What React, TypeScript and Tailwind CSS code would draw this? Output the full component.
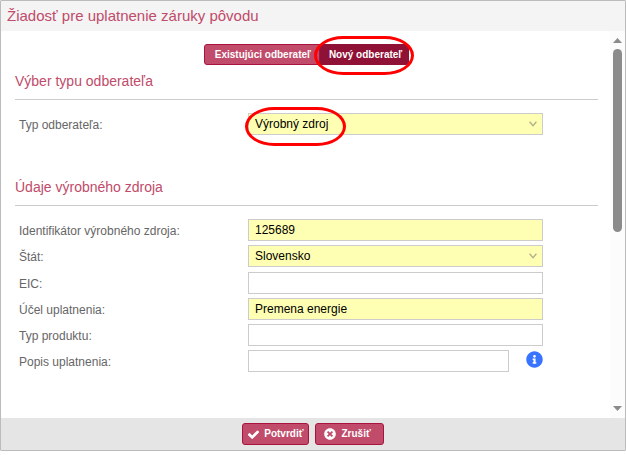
import { useState } from "react";
import type { ReactNode } from "react";
import { FaInfoCircle, FaTimesCircle } from "react-icons/fa";

const controlClass =
  "block w-full h-[22px] border border-[#cccccc] pl-1.5 text-xs text-black outline-none appearance-none";

function SectionTitle({ children }: { children: ReactNode }) {
  return (
    <h2 className="pb-2 border-b border-[#cccccc] text-sm leading-5 text-[#c04b6a]">
      {children}
    </h2>
  );
}

interface RowProps {
  id: string;
  label: string;
  children: ReactNode;
}

function Row({ id, label, children }: RowProps) {
  return (
    <div className="flex items-start pl-1 pr-[55px]">
      <label htmlFor={id} className="w-[229px] shrink-0 leading-6 text-[#666666]">
        {label}
      </label>
      {children}
    </div>
  );
}

interface TextRowProps {
  id: string;
  label: string;
  value?: string;
  required?: boolean;
}

function TextRow({ id, label, value = "", required = false }: TextRowProps) {
  return (
    <Row id={id} label={label}>
      <div className="flex-1 pb-1">
        <input
          id={id}
          type="text"
          defaultValue={value}
          className={`${controlClass} ${required ? "bg-[#ffffb3]" : "bg-white"}`}
        />
      </div>
    </Row>
  );
}

function SelectRow({ id, label, value }: { id: string; label: string; value: string }) {
  return (
    <Row id={id} label={label}>
      <div className="relative flex-1 pb-[5px]">
        <select id={id} defaultValue={value} className={`${controlClass} bg-[#ffffb3]`}>
          <option>{value}</option>
        </select>
        <svg
          viewBox="0 0 8 6"
          className="absolute right-[6px] top-2 w-2 h-1.5 pointer-events-none"
          fill="none"
          stroke="#b3b08c"
          strokeWidth="1.4"
        >
          <path d="M0.6 0.8 4 4.6 7.4 0.8" />
        </svg>
      </div>
    </Row>
  );
}

function CheckIcon() {
  return (
    <svg viewBox="0 0 1792 1792" className="size-[13px]" fill="currentColor" aria-hidden="true">
      <path d="M1671 566q0 40-28 68l-724 724-136 136q-28 28-68 28t-68-28l-136-136-362-362q-28-28-28-68t28-68l136-136q28-28 68-28t68 28l294 295 656-657q28-28 68-28t68 28l136 136q28 28 28 68z" />
    </svg>
  );
}

function Scrollbar() {
  return (
    <div className="w-[15px] shrink-0 flex flex-col items-center py-[7px] bg-[#fcfcfc]" aria-hidden="true">
      <svg viewBox="0 0 9 5" className="w-[9px] h-[5px]" fill="#8b8b8b">
        <path d="M4.5 0 9 5H0z" />
      </svg>
      <div className="flex-1 py-1.5">
        <div className="w-[9px] h-[52%] rounded-full bg-[#8b8b8b]" />
      </div>
      <svg viewBox="0 0 9 5" className="w-[9px] h-[5px]" fill="#8b8b8b">
        <path d="M4.5 5 9 0H0z" />
      </svg>
    </div>
  );
}

// Red outline that points the reader to a control
function Highlight({ className }: { className: string }) {
  return (
    <span
      className={`absolute border-3 border-[#ff0000] rounded-[30px/20px] pointer-events-none ${className}`}
    />
  );
}

export default function App() {
  const [tab, setTab] = useState("new");

  const tabClass = (active: boolean) =>
    `h-[21px] border text-[10px] font-bold text-white ${
      active ? "bg-[#8f1135] border-[#8f1135]" : "bg-[#c04b6a] border-[#a8143e]"
    }`;

  const actionClass =
    "flex items-center h-[22px] border border-[#a8143e] rounded-[3px] bg-[#c04b6a] text-[10px] font-bold text-white";

  return (
    <div className="h-screen pb-1 bg-white font-['Liberation_Sans',Arial,sans-serif] text-xs">
      <div className="h-full flex flex-col border border-[#bbbbbb] rounded-[1px]">
        <header className="h-[30px] shrink-0 flex items-center pl-1.5 bg-[#f4f4f4]">
          <h1 className="text-[15px] text-[#c04b6a]">Žiadosť pre uplatnenie záruky pôvodu</h1>
        </header>

        <main className="flex-1 min-h-0 flex">
          <form id="request" className="flex-1 min-w-0 pl-3.5 pr-3 pt-[13px] overflow-hidden">
            <div className="flex justify-center mb-1.5">
              <button
                type="button"
                aria-pressed={tab === "existing"}
                onClick={() => setTab("existing")}
                className={`${tabClass(tab === "existing")} rounded-l-[3px] pl-2.5 pr-2`}
              >
                Existujúci odberateľ
              </button>
              <div className="relative flex">
                <button
                  type="button"
                  aria-pressed={tab === "new"}
                  onClick={() => setTab("new")}
                  className={`${tabClass(tab === "new")} rounded-r-[3px] pl-2 pr-1.5`}
                >
                  Nový odberateľ
                </button>
                <Highlight className="-left-1.5 -right-[5px] -top-2 -bottom-2.5" />
              </div>
            </div>

            <section className="pb-[37px]">
              <SectionTitle>Výber typu odberateľa</SectionTitle>
              <div className="relative pt-[13px]">
                <SelectRow id="customer-type" label="Typ odberateľa:" value="Výrobný zdroj" />
                <Highlight className="left-[230px] top-[7px] w-[101px] h-[39px]" />
              </div>
            </section>

            <section>
              <SectionTitle>Údaje výrobného zdroja</SectionTitle>
              <div className="pt-[13px]">
                <TextRow id="source-id" label="Identifikátor výrobného zdroja:" value="125689" required />
                <SelectRow id="country" label="Štát:" value="Slovensko" />
                <TextRow id="eic" label="EIC:" />
                <TextRow id="purpose" label="Účel uplatnenia:" value="Premena energie" required />
                <TextRow id="product" label="Typ produktu:" />
                <Row id="description" label="Popis uplatnenia:">
                  <input id="description" type="text" className={`${controlClass} flex-1 bg-white`} />
                  <button type="button" aria-label="Info" className="ml-[17px] pt-px shrink-0">
                    <FaInfoCircle className="size-[17px] text-[#3874ff]" />
                  </button>
                </Row>
              </div>
            </section>
          </form>
          <Scrollbar />
        </main>

        <footer className="h-8 shrink-0 flex items-center justify-center gap-1.5 bg-[#e5e5e5]">
          <button type="submit" form="request" className={`${actionClass} gap-1 px-1`}>
            <CheckIcon />
            Potvrdiť
          </button>
          <button type="button" className={`${actionClass} gap-1.5 pl-2 pr-3`}>
            <FaTimesCircle className="size-3" />
            Zrušiť
          </button>
        </footer>
      </div>
    </div>
  );
}
